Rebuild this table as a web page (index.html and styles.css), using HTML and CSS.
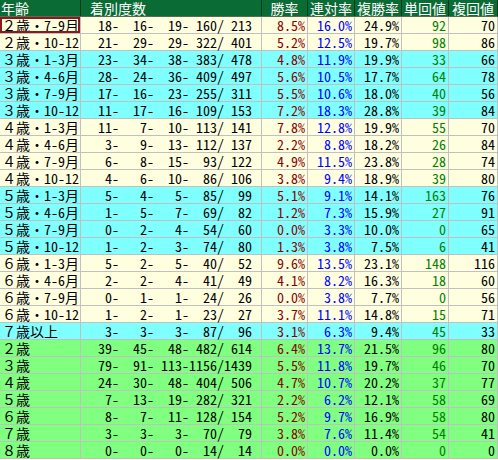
FILE: index.html
```html
<!DOCTYPE html>
<html lang="ja">
<head>
<meta charset="utf-8">
<title>年齢別成績</title>
<link rel="stylesheet" href="styles.css">
</head>
<body>
<div class="sheet">
  <div class="head">
    <div class="h h-age">年齢</div>
    <div class="h h-rec">着別度数</div>
    <div class="h">勝率</div>
    <div class="h">連対率</div>
    <div class="h">複勝率</div>
    <div class="h">単回値</div>
    <div class="h">複回値</div>
  </div>
  <div class="body">
    <div class="c age y sel">２歳・<span class="hw">7-9</span>月</div><div class="c rec y"><span>18-</span><span>16-</span><span>19-</span><span>160/</span><span>213</span></div><div class="c n win y">8.5%</div><div class="c n ren y">16.0%</div><div class="c n fuku y">24.9%</div><div class="c n tan y">92</div><div class="c n fk y">70</div>
    <div class="c age y">２歳・<span class="hw">10-12</span></div><div class="c rec y"><span>21-</span><span>29-</span><span>29-</span><span>322/</span><span>401</span></div><div class="c n win y">5.2%</div><div class="c n ren y">12.5%</div><div class="c n fuku y">19.7%</div><div class="c n tan y">98</div><div class="c n fk y">86</div>
    <div class="c age b">３歳・<span class="hw">1-3</span>月</div><div class="c rec b"><span>23-</span><span>34-</span><span>38-</span><span>383/</span><span>478</span></div><div class="c n win b">4.8%</div><div class="c n ren b">11.9%</div><div class="c n fuku b">19.9%</div><div class="c n tan b">33</div><div class="c n fk b">66</div>
    <div class="c age b">３歳・<span class="hw">4-6</span>月</div><div class="c rec b"><span>28-</span><span>24-</span><span>36-</span><span>409/</span><span>497</span></div><div class="c n win b">5.6%</div><div class="c n ren b">10.5%</div><div class="c n fuku b">17.7%</div><div class="c n tan b">64</div><div class="c n fk b">78</div>
    <div class="c age b">３歳・<span class="hw">7-9</span>月</div><div class="c rec b"><span>17-</span><span>16-</span><span>23-</span><span>255/</span><span>311</span></div><div class="c n win b">5.5%</div><div class="c n ren b">10.6%</div><div class="c n fuku b">18.0%</div><div class="c n tan b">40</div><div class="c n fk b">56</div>
    <div class="c age b">３歳・<span class="hw">10-12</span></div><div class="c rec b"><span>11-</span><span>17-</span><span>16-</span><span>109/</span><span>153</span></div><div class="c n win b">7.2%</div><div class="c n ren b">18.3%</div><div class="c n fuku b">28.8%</div><div class="c n tan b">39</div><div class="c n fk b">84</div>
    <div class="c age y">４歳・<span class="hw">1-3</span>月</div><div class="c rec y"><span>11-</span><span>7-</span><span>10-</span><span>113/</span><span>141</span></div><div class="c n win y">7.8%</div><div class="c n ren y">12.8%</div><div class="c n fuku y">19.9%</div><div class="c n tan y">55</div><div class="c n fk y">70</div>
    <div class="c age y">４歳・<span class="hw">4-6</span>月</div><div class="c rec y"><span>3-</span><span>9-</span><span>13-</span><span>112/</span><span>137</span></div><div class="c n win y">2.2%</div><div class="c n ren y">8.8%</div><div class="c n fuku y">18.2%</div><div class="c n tan y">26</div><div class="c n fk y">84</div>
    <div class="c age y">４歳・<span class="hw">7-9</span>月</div><div class="c rec y"><span>6-</span><span>8-</span><span>15-</span><span>93/</span><span>122</span></div><div class="c n win y">4.9%</div><div class="c n ren y">11.5%</div><div class="c n fuku y">23.8%</div><div class="c n tan y">28</div><div class="c n fk y">74</div>
    <div class="c age y">４歳・<span class="hw">10-12</span></div><div class="c rec y"><span>4-</span><span>6-</span><span>10-</span><span>86/</span><span>106</span></div><div class="c n win y">3.8%</div><div class="c n ren y">9.4%</div><div class="c n fuku y">18.9%</div><div class="c n tan y">39</div><div class="c n fk y">80</div>
    <div class="c age b">５歳・<span class="hw">1-3</span>月</div><div class="c rec b"><span>5-</span><span>4-</span><span>5-</span><span>85/</span><span>99</span></div><div class="c n win b">5.1%</div><div class="c n ren b">9.1%</div><div class="c n fuku b">14.1%</div><div class="c n tan b">163</div><div class="c n fk b">76</div>
    <div class="c age b">５歳・<span class="hw">4-6</span>月</div><div class="c rec b"><span>1-</span><span>5-</span><span>7-</span><span>69/</span><span>82</span></div><div class="c n win b">1.2%</div><div class="c n ren b">7.3%</div><div class="c n fuku b">15.9%</div><div class="c n tan b">27</div><div class="c n fk b">91</div>
    <div class="c age b">５歳・<span class="hw">7-9</span>月</div><div class="c rec b"><span>0-</span><span>2-</span><span>4-</span><span>54/</span><span>60</span></div><div class="c n win b">0.0%</div><div class="c n ren b">3.3%</div><div class="c n fuku b">10.0%</div><div class="c n tan b">0</div><div class="c n fk b">65</div>
    <div class="c age b">５歳・<span class="hw">10-12</span></div><div class="c rec b"><span>1-</span><span>2-</span><span>3-</span><span>74/</span><span>80</span></div><div class="c n win b">1.3%</div><div class="c n ren b">3.8%</div><div class="c n fuku b">7.5%</div><div class="c n tan b">6</div><div class="c n fk b">41</div>
    <div class="c age y">６歳・<span class="hw">1-3</span>月</div><div class="c rec y"><span>5-</span><span>2-</span><span>5-</span><span>40/</span><span>52</span></div><div class="c n win y">9.6%</div><div class="c n ren y">13.5%</div><div class="c n fuku y">23.1%</div><div class="c n tan y">148</div><div class="c n fk y">116</div>
    <div class="c age y">６歳・<span class="hw">4-6</span>月</div><div class="c rec y"><span>2-</span><span>2-</span><span>4-</span><span>41/</span><span>49</span></div><div class="c n win y">4.1%</div><div class="c n ren y">8.2%</div><div class="c n fuku y">16.3%</div><div class="c n tan y">18</div><div class="c n fk y">60</div>
    <div class="c age y">６歳・<span class="hw">7-9</span>月</div><div class="c rec y"><span>0-</span><span>1-</span><span>1-</span><span>24/</span><span>26</span></div><div class="c n win y">0.0%</div><div class="c n ren y">3.8%</div><div class="c n fuku y">7.7%</div><div class="c n tan y">0</div><div class="c n fk y">56</div>
    <div class="c age y">６歳・<span class="hw">10-12</span></div><div class="c rec y"><span>1-</span><span>2-</span><span>1-</span><span>23/</span><span>27</span></div><div class="c n win y">3.7%</div><div class="c n ren y">11.1%</div><div class="c n fuku y">14.8%</div><div class="c n tan y">15</div><div class="c n fk y">71</div>
    <div class="c age b">７歳以上</div><div class="c rec b"><span>3-</span><span>3-</span><span>3-</span><span>87/</span><span>96</span></div><div class="c n win b">3.1%</div><div class="c n ren b">6.3%</div><div class="c n fuku b">9.4%</div><div class="c n tan b">45</div><div class="c n fk b">33</div>
    <div class="c age g">２歳</div><div class="c rec g"><span>39-</span><span>45-</span><span>48-</span><span>482/</span><span>614</span></div><div class="c n win g">6.4%</div><div class="c n ren g">13.7%</div><div class="c n fuku g">21.5%</div><div class="c n tan g">96</div><div class="c n fk g">80</div>
    <div class="c age g">３歳</div><div class="c rec g"><span>79-</span><span>91-</span><span>113-</span><span>1156/</span><span>1439</span></div><div class="c n win g">5.5%</div><div class="c n ren g">11.8%</div><div class="c n fuku g">19.7%</div><div class="c n tan g">46</div><div class="c n fk g">70</div>
    <div class="c age g">４歳</div><div class="c rec g"><span>24-</span><span>30-</span><span>48-</span><span>404/</span><span>506</span></div><div class="c n win g">4.7%</div><div class="c n ren g">10.7%</div><div class="c n fuku g">20.2%</div><div class="c n tan g">37</div><div class="c n fk g">77</div>
    <div class="c age g">５歳</div><div class="c rec g"><span>7-</span><span>13-</span><span>19-</span><span>282/</span><span>321</span></div><div class="c n win g">2.2%</div><div class="c n ren g">6.2%</div><div class="c n fuku g">12.1%</div><div class="c n tan g">58</div><div class="c n fk g">69</div>
    <div class="c age g">６歳</div><div class="c rec g"><span>8-</span><span>7-</span><span>11-</span><span>128/</span><span>154</span></div><div class="c n win g">5.2%</div><div class="c n ren g">9.7%</div><div class="c n fuku g">16.9%</div><div class="c n tan g">58</div><div class="c n fk g">80</div>
    <div class="c age g">７歳</div><div class="c rec g"><span>3-</span><span>3-</span><span>3-</span><span>70/</span><span>79</span></div><div class="c n win g">3.8%</div><div class="c n ren g">7.6%</div><div class="c n fuku g">11.4%</div><div class="c n tan g">54</div><div class="c n fk g">41</div>
    <div class="c age g">８歳</div><div class="c rec g"><span>0-</span><span>0-</span><span>0-</span><span>14/</span><span>14</span></div><div class="c n win g">0.0%</div><div class="c n ren g">0.0%</div><div class="c n fuku g">0.0%</div><div class="c n tan g">0</div><div class="c n fk g">0</div>
  </div>
</div>
</body>
</html>
```
FILE: styles.css
```css
html, body {
  margin: 0;
  padding: 0;
}
body {
  background: #ffffe0;
  font-family: "Noto Sans CJK JP", "Noto Sans", sans-serif;
  font-size: 14px;
  color: #000;
}
.sheet {
  width: 498px;
}
.head,
.body {
  display: grid;
  grid-template-columns: 80px 180px 45px 46px 46px 46px 48px;
  column-gap: 1px;
  padding-right: 1px;
}
.head {
  background: #003c1e;
  grid-template-rows: 16px;
  border-bottom: 1px solid #5a6a5a;
}
.body {
  background: #c0c0c0;
  row-gap: 1px;
  grid-auto-rows: 16px;
  padding-bottom: 1px;
}
.h {
  background: #0a6b34;
  color: #fff;
  line-height: 16px;
  text-align: center;
  white-space: nowrap;
}
.h-age {
  text-align: left;
  padding-left: 1px;
}
.h-rec {
  text-align: left;
  padding-left: 9px;
}
.c {
  line-height: 16px;
  white-space: nowrap;
}
.hw,
.rec,
.n {
  font-feature-settings: "hwid" 1;
}
.age {
  padding-left: 2px;
}
.rec {
  display: flex;
  padding-left: 3px;
}
.rec span {
  width: 35px;
  flex: none;
  text-align: right;
}
.rec span:last-child {
  width: 28px;
}
.n {
  text-align: right;
  padding-right: 2px;
}
.win { color: #8b0000; }
.ren { color: #0000ff; }
.fuku { color: #000; }
.tan { color: #008000; }
.fk { color: #000; }
.y { background: #ffffe0; }
.b { background: #80ffff; }
.g { background: #80ff80; }
.sel {
  outline: 2px solid #8b1a1a;
  outline-offset: -2px;
}
```
